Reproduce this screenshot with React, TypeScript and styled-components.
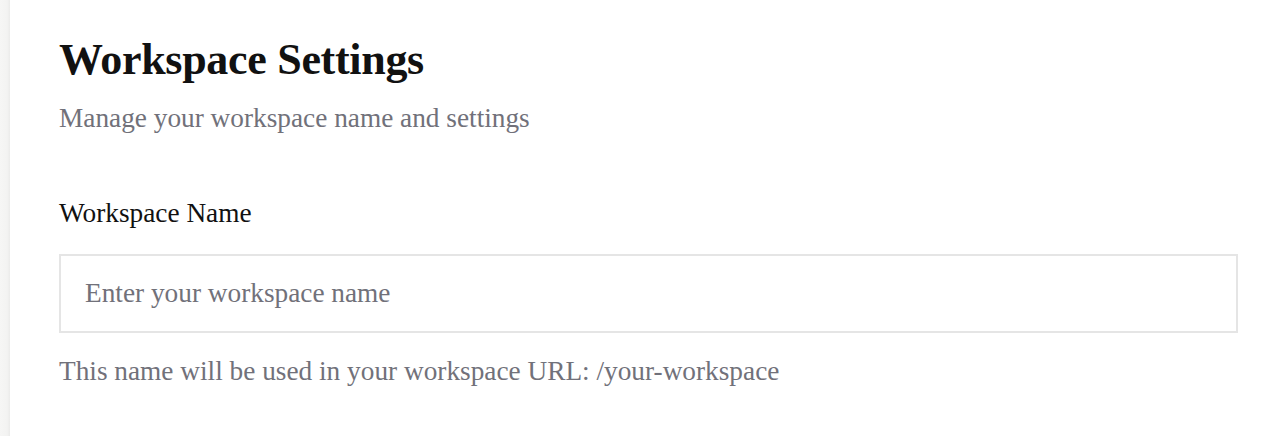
import React from "react";
import styled, { createGlobalStyle } from "styled-components";

const Global = createGlobalStyle`
  html, body { margin: 0; padding: 0; background: #ffffff; }
  body { font-family: "Liberation Serif", "DejaVu Serif", serif; }
  * { box-sizing: border-box; }
`;

const Shell = styled.div`
  display: flex;
  min-height: 436px;
  width: 1282px;
`;

const Edge = styled.div`
  width: 10px;
  flex: none;
  background: linear-gradient(to right, #f6f6f5 0%, #f3f3f2 70%, #ebebea 100%);
`;

const Main = styled.main`
  flex: 1;
  padding: 36px 44px 0 49px;
  display: flex;
  flex-direction: column;
`;

const Title = styled.h1`
  margin: 0;
  font-size: 44px;
  line-height: 48px;
  font-weight: 700;
  color: #111111;
  letter-spacing: -0.3px;
`;

const Subtitle = styled.p`
  margin: 18px 0 0;
  font-size: 27.3px;
  line-height: 32px;
  color: #71717a;
`;

const Field = styled.div`
  margin-top: 63px;
  display: flex;
  flex-direction: column;
`;

const Label = styled.label`
  font-size: 27.3px;
  line-height: 32px;
  color: #111111;
`;

const Input = styled.input`
  margin-top: 25px;
  height: 79px;
  width: 1179px;
  border: 2px solid #e5e5e5;
  background: #ffffff;
  padding: 0 24px;
  font-family: inherit;
  font-size: 27.3px;
  color: #111;
  outline: none;
  &::placeholder { color: #71717a; }
`;

const Help = styled.p`
  margin: 22px 0 0;
  font-size: 27.3px;
  line-height: 32px;
  color: #71717a;
`;

export default function App() {
  return (
    <>
      <Global />
      <Shell>
        <Edge />
        <Main>
          <Title>Workspace Settings</Title>
          <Subtitle>Manage your workspace name and settings</Subtitle>
          <Field>
            <Label htmlFor="ws">Workspace Name</Label>
            <Input id="ws" placeholder="Enter your workspace name" />
            <Help>This name will be used in your workspace URL: /your-workspace</Help>
          </Field>
        </Main>
      </Shell>
    </>
  );
}
